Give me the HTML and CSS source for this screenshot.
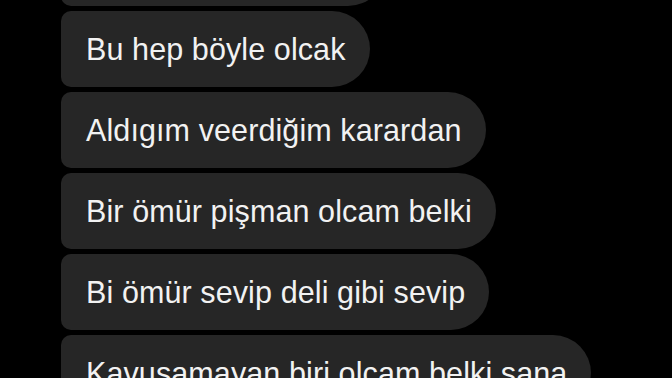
FILE: index.html
```html
<!DOCTYPE html>
<html lang="tr">
<head>
<meta charset="utf-8">
<link rel="stylesheet" href="styles.css">
</head>
<body>
<div class="thread">
  <div class="bubble">Seni hep sevcem ya</div>
  <div class="bubble">Bu hep böyle olcak</div>
  <div class="bubble">Aldıgım veerdiğim karardan</div>
  <div class="bubble">Bir ömür pişman olcam belki</div>
  <div class="bubble">Bi ömür sevip deli gibi sevip</div>
  <div class="bubble">Kavuşamayan biri olcam belki sana</div>
</div>
</body>
</html>
```
FILE: styles.css
```css
html, body {
  margin: 0;
  padding: 0;
  background: #000;
  overflow: hidden;
}
.thread {
  display: flex;
  flex-direction: column;
  align-items: flex-start;
  gap: 5px;
  padding-left: 61px;
  margin-top: -70px;
}
.bubble {
  background: #262626;
  color: #f2f2f2;
  font-family: "Liberation Sans", Arial, sans-serif;
  font-size: 30.5px;
  letter-spacing: 0.1px;
  line-height: 36px;
  padding: 20px 24px 20px 25px;
  border-radius: 10px 38px 38px 10px;
  white-space: nowrap;
}
```
